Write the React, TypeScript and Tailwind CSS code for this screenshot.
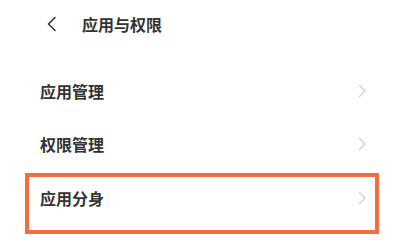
const rows = [
  { label: '应用管理', h: 'h-[54px] pb-[6px]', active: false },
  { label: '权限管理', h: 'h-[52px] pb-[6px]', active: false },
  { label: '应用分身', h: 'h-[61px] pb-[12px]', active: true },
]

function ChevronRight() {
  return (
    <svg width="9" height="14" viewBox="0 0 9 14" fill="none">
      <path d="M1.5 1.5 L7 7 L1.5 12.5" stroke="#cfcfcf" strokeWidth="1.3" strokeLinecap="round" strokeLinejoin="round" />
    </svg>
  )
}

export default function App() {
  return (
    <div className="w-[404px] h-[251px] bg-white overflow-hidden font-['Noto_Sans_CJK_SC','Noto_Sans',sans-serif] text-[#333333]">
      {/* header */}
      <div className="h-[50px] flex items-center pl-[46px] pb-[2px]">
        <svg width="11" height="16" viewBox="0 0 11 16" fill="none">
          <path d="M9 1.5 L2.5 8 L9 14.5" stroke="#333333" strokeWidth="1.6" strokeLinecap="round" strokeLinejoin="round" />
        </svg>
        <span className="ml-[25px] text-[16px] font-semibold leading-none">应用与权限</span>
      </div>

      <div className="mt-[17px] px-[25px]">
        {rows.map((row) => (
          <div
            key={row.label}
            className={`${row.h} flex items-center justify-between border-4 pl-[11px] pr-[8px] ${
              row.active ? 'border-[#f36d3e]' : 'border-transparent'
            }`}
          >
            <span className="text-[16px] font-semibold leading-none">{row.label}</span>
            <ChevronRight />
          </div>
        ))}
      </div>
    </div>
  )
}
